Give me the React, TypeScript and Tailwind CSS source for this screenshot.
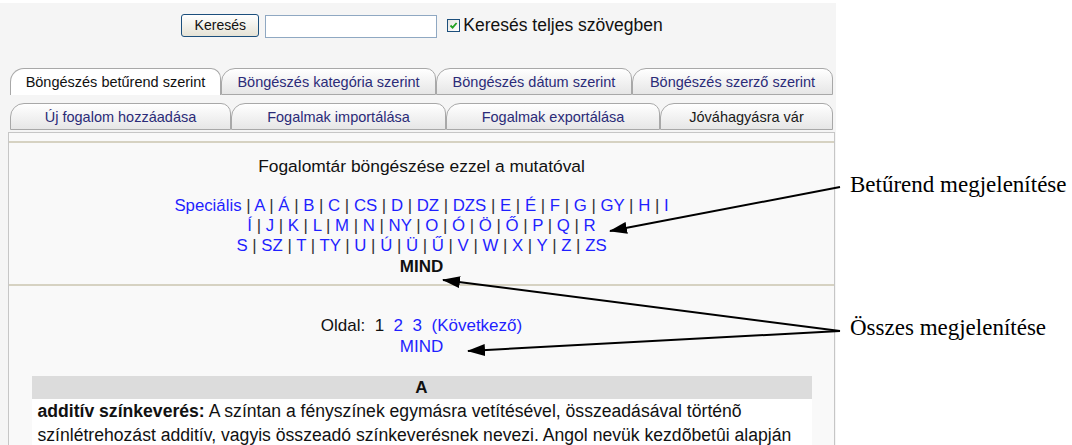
import type { ReactNode } from "react";

type Tab = { label: string; width: string; active?: boolean; dark?: boolean };

const browseTabs: Tab[] = [
  { label: "Böngészés betűrend szerint", width: "w-[211px]", active: true },
  { label: "Böngészés kategória szerint", width: "w-[215px]" },
  { label: "Böngészés dátum szerint", width: "w-[196px]" },
  { label: "Böngészés szerző szerint", width: "w-[201px]" },
];

const actionTabs: Tab[] = [
  { label: "Új fogalom hozzáadása", width: "w-[221px]" },
  { label: "Fogalmak importálása", width: "w-[215px]" },
  { label: "Fogalmak exportálása", width: "w-[214px]" },
  { label: "Jóváhagyásra vár", width: "w-[173px]", dark: true },
];

const letterRows = [
  ["Speciális", "A", "Á", "B", "C", "CS", "D", "DZ", "DZS", "E", "É", "F", "G", "GY", "H", "I"],
  ["Í", "J", "K", "L", "M", "N", "NY", "O", "Ó", "Ö", "Ő", "P", "Q", "R"],
  ["S", "SZ", "T", "TY", "U", "Ú", "Ü", "Ű", "V", "W", "X", "Y", "Z", "ZS"],
];

function TabRow({ tabs }: { tabs: Tab[] }) {
  return (
    <div className="flex h-[27px] items-stretch">
      {tabs.map((tab) => (
        <div
          key={tab.label}
          className={`${tab.width} flex items-center justify-center rounded-tl-[14px] rounded-tr-[10px] border border-[#a8a8a8] text-[14.5px] leading-none ${
            tab.active
              ? "border-b-0 bg-white text-[#111]"
              : `bg-gradient-to-b from-white to-[#e6e6e6] ${tab.dark ? "text-[#1a1a1a]" : "text-[#2b2b78]"}`
          }`}
        >
          {tab.label}
        </div>
      ))}
    </div>
  );
}

function LetterLine({ items }: { items: string[] }) {
  return (
    <div className="leading-[20px]">
      {items.map((item, i) => (
        <span key={item}>
          {i > 0 && <span className="text-[#333]"> | </span>}
          <span className="text-[#1f1fff]">{item}</span>
        </span>
      ))}
    </div>
  );
}

function Note({ children, className }: { children: ReactNode; className: string }) {
  return (
    <p className={`font-['Liberation_Serif','Times_New_Roman',serif] text-[23px] leading-[26px] text-black ${className}`}>
      {children}
    </p>
  );
}

export default function App() {
  return (
    <div className="relative flex h-[445px] w-[1072px] overflow-hidden bg-white font-['Liberation_Sans',Arial,sans-serif]">
      <div className="w-[836px] shrink-0 border-t-[3px] border-white bg-[#f5f5f5]">
        {/* search form */}
        <div className="flex items-center justify-center pt-[9px] pl-[8px]">
          <button className="h-[23px] w-[78px] rounded-[3px] border border-[#1c4f7c] bg-gradient-to-b from-white to-[#e6e3d6] text-[14px] text-[#111]">
            Keresés
          </button>
          <div className="ml-[6px] mt-[2px] h-[23px] w-[172px] border border-[#8fa8c2] bg-white" />
          <div className="ml-[10px] mt-[1px] flex h-[13px] w-[13px] items-center justify-center border border-[#1c4f7c] bg-gradient-to-br from-[#e4e4e0] to-white">
            <svg width="9" height="9" viewBox="0 0 9 9">
              <path d="M1.5 4.5 L3.6 6.6 L7.6 2" fill="none" stroke="#21a121" strokeWidth="1.8" />
            </svg>
          </div>
          <span className="ml-[3px] text-[17.5px] text-[#111]">Keresés teljes szövegben</span>
        </div>

        {/* tabs */}
        <div className="mt-[30px] pl-[10px]">
          <TabRow tabs={browseTabs} />
          <div className="mt-[8px]">
            <TabRow tabs={actionTabs} />
          </div>
        </div>

        {/* glossary box */}
        <div className="ml-[8px] mt-[2px] w-[827px] border border-b-0 border-[#c6c6c6] bg-[#f9f9f9] text-[17px] text-[#111]">
          <div className="h-[10px] border-b-2 border-[#d6d2c2]" />
          <div className="pt-[13px] text-center text-[17.4px] leading-[20px]">Fogalomtár böngészése ezzel a mutatóval</div>
          <div className="mt-[20px] text-center text-[16.8px]">
            {letterRows.map((row) => (
              <LetterLine key={row[0]} items={row} />
            ))}
            <div className="mt-[1px] text-[17px] font-bold leading-[20px]">MIND</div>
          </div>
          <div className="mt-[7px] h-[2px] bg-[#d6d2c2]" />
          <div className="mt-[29px] text-center leading-[21px]">
            <div>
              Oldal:&nbsp; 1&nbsp; <span className="text-[#1f1fff]">2</span>&nbsp;{" "}
              <span className="text-[#1f1fff]">3</span>&nbsp;{" "}
              <span className="text-[#1f1fff]">(Következő)</span>
            </div>
            <div className="text-[#1f1fff]">MIND</div>
          </div>
          <div className="mx-auto mt-[19px] w-[780px]">
            <div className="flex h-[23px] items-center justify-center bg-[#dcdcdc] font-bold">A</div>
            <div className="bg-white px-[6px] text-[17.6px] leading-[24px]">
              <b>additív színkeverés:</b> A színtan a fényszínek egymásra vetítésével, összeadásával történõ
              színlétrehozást additív, vagyis összeadó színkeverésnek nevezi. Angol nevük kezdõbetûi alapján
            </div>
          </div>
        </div>
      </div>

      {/* annotations */}
      <div className="flex-1">
        <Note className="ml-[14px] mt-[172px]">Betűrend megjelenítése</Note>
        <Note className="ml-[14px] mt-[117px]">Összes megjelenítése</Note>
      </div>

      <svg className="pointer-events-none absolute inset-0" width="1072" height="445" viewBox="0 0 1072 445">
        <defs>
          <marker id="head" markerWidth="18" markerHeight="12" refX="17" refY="6" orient="auto" markerUnits="userSpaceOnUse">
            <path d="M0 0 L18 6 L0 12 Z" fill="#000" />
          </marker>
        </defs>
        <g stroke="#000" strokeWidth="2" fill="none">
          <line x1="840" y1="187" x2="610" y2="231" markerEnd="url(#head)" />
          <line x1="840" y1="331" x2="443" y2="280" markerEnd="url(#head)" />
          <line x1="840" y1="331" x2="468" y2="351" markerEnd="url(#head)" />
        </g>
      </svg>
    </div>
  );
}
